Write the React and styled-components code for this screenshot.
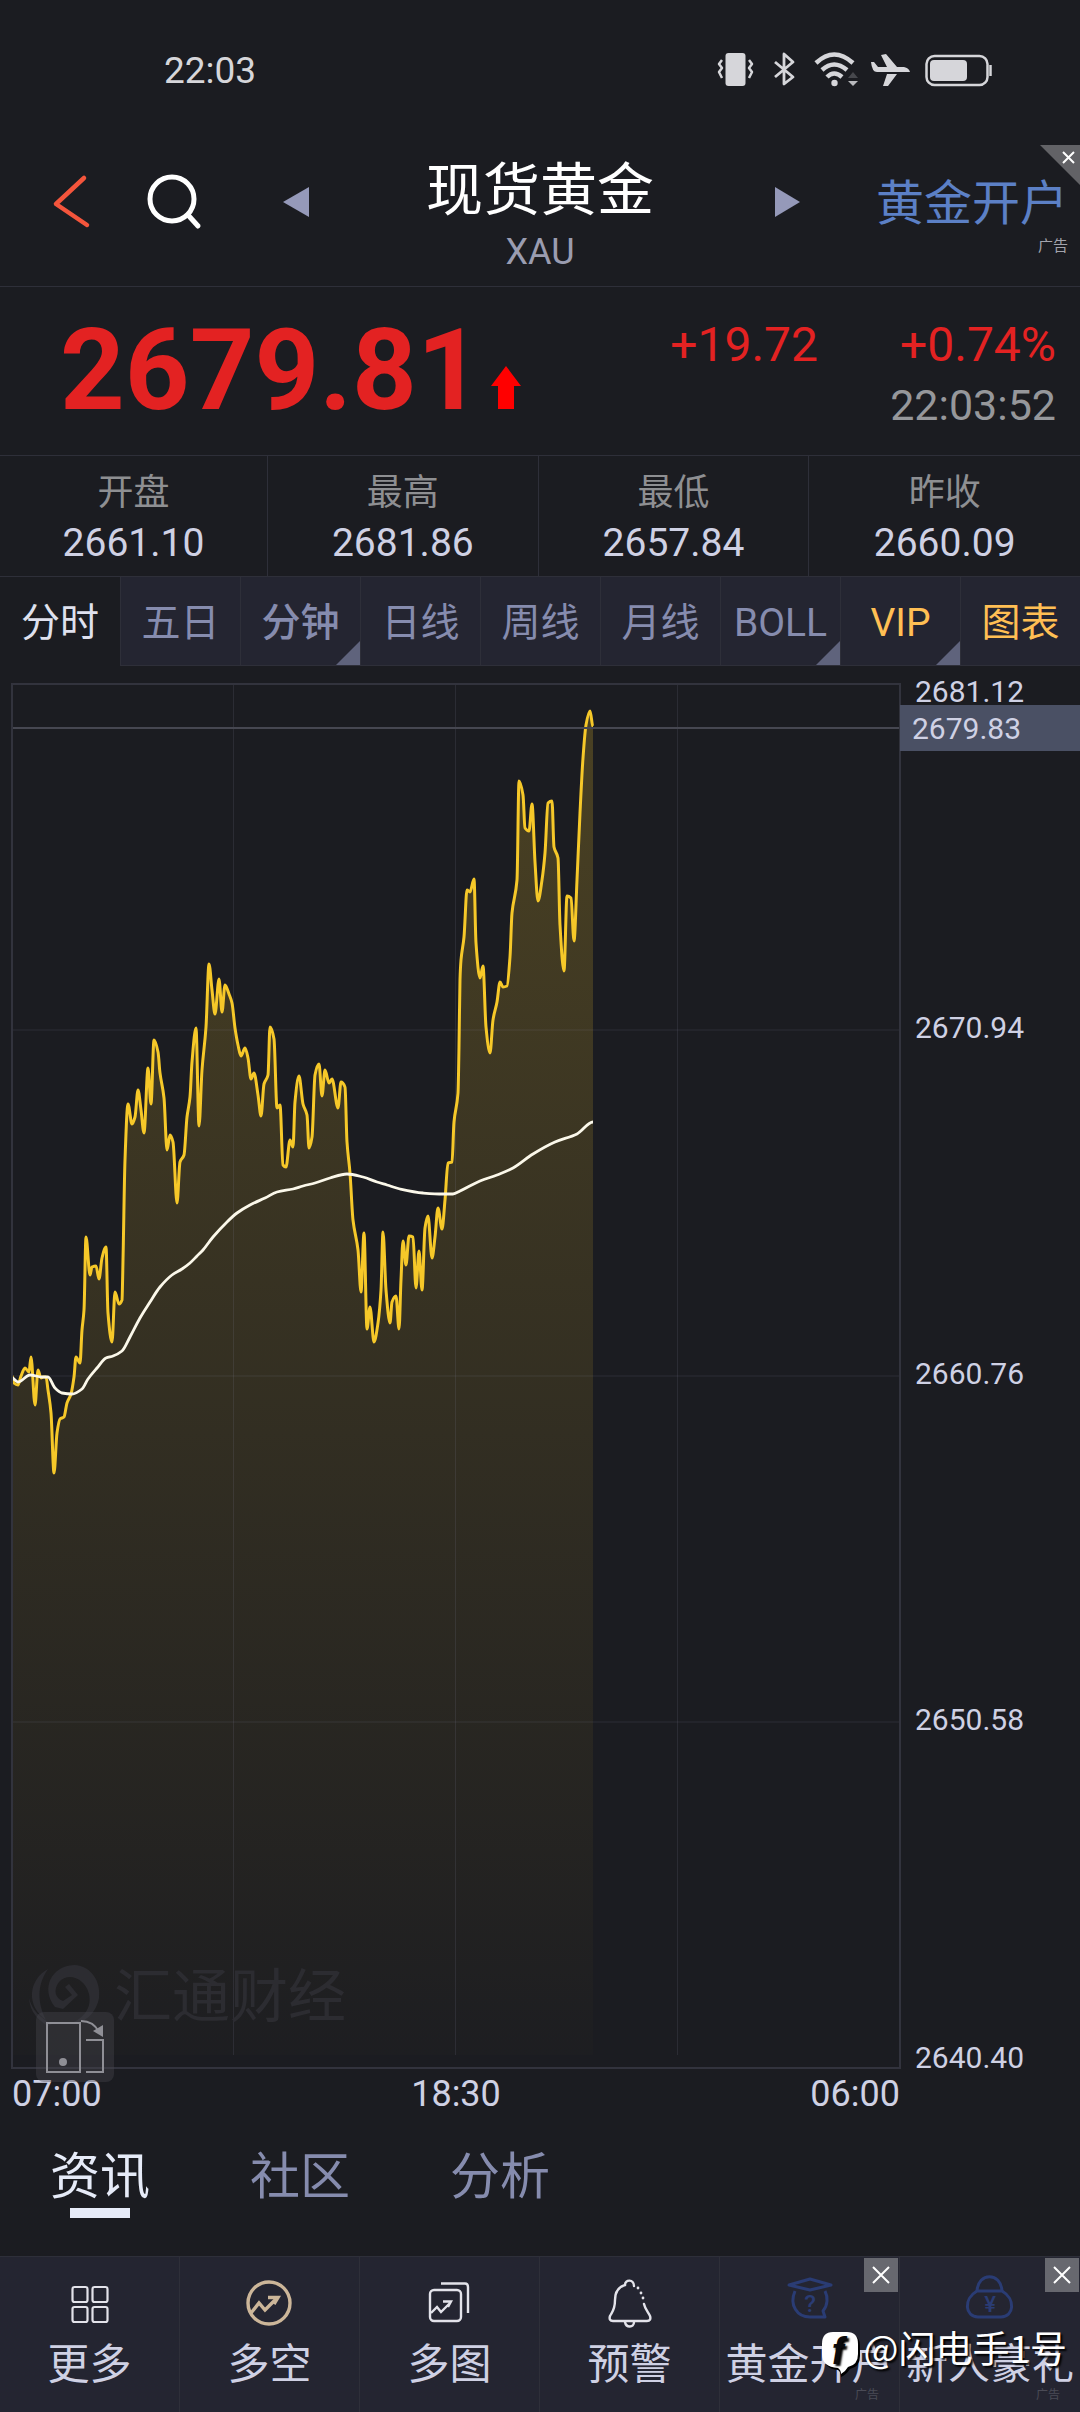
import React from "react";
import styled, { createGlobalStyle, css } from "styled-components";

const bg = "#1b1c21";
const panel = "#242531";
const line = "#2e2f39";
const red = "#e32222";
const muted = "#868cae";
const light = "#cfd1e4";
const gold = "#ffbf54";

/* price line and average line, in plot units (888 x 1384) */
const PLOT_W = 888;
const PLOT_H = 1384;
const AREA_BOTTOM = 1371;

const price = [
    [0,692],[2,699],[6,701],[9,692],[13,684],[17,688],[19,673],[23,721],[26,686],[29,694],[31,693],[34,693],
    [36,706],[39,729],[42,789],[45,749],[48,735],[52,733],[55,719],[59,710],[62,693],[64,673],[68,679],[70,646],
    [72,626],[74,553],[78,591],[80,583],[84,582],[87,595],[90,574],[94,563],[96,629],[100,658],[103,608],[107,620],
    [110,616],[111,576],[113,476],[116,420],[120,440],[123,433],[126,406],[129,426],[132,449],[136,384],[139,420],
    [142,356],[146,368],[148,389],[152,414],[155,466],[158,451],[161,458],[165,519],[168,478],[172,471],[175,433],
    [178,413],[180,378],[184,344],[187,442],[190,386],[194,343],[197,280],[200,306],[203,330],[207,295],[210,328],
    [213,301],[217,310],[220,319],[223,344],[226,361],[229,372],[233,364],[236,374],[239,395],[242,389],[246,411],
    [249,432],[252,400],[256,391],[258,343],[262,355],[265,424],[268,421],[271,481],[274,483],[278,456],[281,463],
    [283,418],[287,392],[291,420],[295,431],[297,464],[300,453],[303,391],[307,380],[310,412],[313,386],[317,399],
    [320,395],[326,424],[329,398],[333,403],[335,458],[338,489],[341,536],[346,566],[349,608],[352,549],[355,645],
    [358,623],[362,658],[366,639],[369,606],[371,548],[374,606],[378,639],[380,618],[384,612],[387,645],[389,596],
    [391,557],[394,581],[397,552],[401,553],[404,604],[407,567],[410,606],[413,544],[416,532],[420,574],[423,553],
    [426,524],[430,545],[433,516],[436,479],[440,478],[442,438],[446,409],[447,363],[448,296],[449,276],[452,253],
    [455,206],[458,208],[462,195],[464,259],[468,294],[471,282],[474,343],[478,369],[481,336],[485,318],[488,298],
    [491,303],[495,302],[498,273],[500,229],[505,196],[507,97],[511,111],[513,144],[517,147],[520,120],[523,178],
    [526,217],[530,196],[533,169],[536,119],[540,117],[542,163],[546,174],[548,241],[552,287],[555,212],[559,214],
    [562,257],[565,196],[568,129],[571,74],[574,41],[578,27],[581,43],
];

const average = [
    [0,694],[6,698],[18,691],[30,693],[36,693],[43,704],[50,709],[60,710],[70,705],[76,695],[85,684],[94,674],
    [101,672],[110,667],[118,653],[128,634],[138,618],[148,603],[160,591],[170,585],[178,579],[185,572],[191,566],
    [201,553],[215,538],[225,529],[238,521],[253,514],[265,508],[281,505],[291,502],[303,499],[318,494],[335,490],
    [351,493],[365,498],[375,501],[388,505],[411,509],[431,510],[441,510],[448,507],[468,497],[485,491],[501,484],
    [521,470],[543,458],[565,450],[581,438],
];

// monotone cubic, so the peaks stay where the data puts them
function smooth(points) {
    const slope = (a, b) => (b[1] - a[1]) / (b[0] - a[0]);
    const tangents = points.map((p, i) => {
        if (i === 0 || i === points.length - 1) return 0;
        const before = slope(points[i - 1], p);
        const after = slope(p, points[i + 1]);
        return before * after <= 0 ? 0 : (2 * before * after) / (before + after);
    });
    return points.reduce((d, p, i) => {
        if (i === 0) return `M${p[0]} ${p[1]}`;
        const q = points[i - 1];
        const h = (p[0] - q[0]) / 3;
        const c1 = (q[1] + tangents[i - 1] * h).toFixed(1);
        const c2 = (p[1] - tangents[i] * h).toFixed(1);
        return `${d}C${(q[0] + h).toFixed(1)} ${c1} ${(p[0] - h).toFixed(1)} ${c2} ${p[0]} ${p[1]}`;
    }, "");
}

const stats = [
    ["开盘", "2661.10"],
    ["最高", "2681.86"],
    ["最低", "2657.84"],
    ["昨收", "2660.09"],
];

const periods = [
    { name: "分时", active: true },
    { name: "五日" },
    { name: "分钟", more: true, strong: true },
    { name: "日线" },
    { name: "周线" },
    { name: "月线" },
    { name: "BOLL", more: true },
    { name: "VIP", more: true, gold: true },
    { name: "图表", gold: true },
];

const scale = ["2681.12", "2670.94", "2660.76", "2650.58", "2640.40"];

const tools = [
    { name: "更多", Icon: GridIcon },
    { name: "多空", Icon: TrendIcon },
    { name: "多图", Icon: ChartsIcon },
    { name: "预警", Icon: BellIcon },
    { name: "黄金开户", Icon: HatIcon, ad: true },
    { name: "新人豪礼", Icon: PurseIcon, ad: true },
];

export default function App() {
    return (
        <Screen>
            <GlobalStyle />
            <StatusBar>
                <span>22:03</span>
                <StatusIcons />
            </StatusBar>

            <Header>
                <HeaderSide>
                    <IconButton aria-label="返回">
                        <svg width="40" height="60" viewBox="0 0 40 60" fill="none" stroke="#f4553c" strokeWidth="4.500" strokeLinecap="round" strokeLinejoin="round">
                            <path d="M34 6 L6 32 L37 53" />
                        </svg>
                    </IconButton>
                    <IconButton aria-label="搜索">
                        <svg width="60" height="60" viewBox="0 0 60 60" fill="none" stroke="#fff" strokeWidth="5" strokeLinecap="round">
                            <circle cx="28" cy="27" r="22" />
                            <path d="M44 43 L54 54" />
                        </svg>
                    </IconButton>
                </HeaderSide>
                <HeaderMiddle>
                    <IconButton aria-label="上一个">
                        <svg width="32" height="32" viewBox="0 0 32 32" fill="#9599b9"><path d="M3 16 L29 1 V31 Z" /></svg>
                    </IconButton>
                    <Title>
                        <h1>现货黄金</h1>
                        <p>XAU</p>
                    </Title>
                    <IconButton aria-label="下一个">
                        <svg width="32" height="32" viewBox="0 0 32 32" fill="#9599b9"><path d="M32 16 L7 1 V31 Z" /></svg>
                    </IconButton>
                </HeaderMiddle>
                <HeaderAd>
                    <a href="#open">黄金开户</a>
                    <span>广告</span>
                </HeaderAd>
                <CornerClose aria-label="关闭广告">
                    <svg width="40" height="40" viewBox="0 0 40 40">
                        <path d="M0 0 H40 V40 Z" fill="#626266" />
                        <path d="M23 7 L34 18 M34 7 L23 18" stroke="#fff" strokeWidth="2" />
                    </svg>
                </CornerClose>
            </Header>

            <Quote>
                <Price>
                    2679.81
                    <svg width="30" height="44" viewBox="0 0 30 44" fill="#ff0000"><path d="M15 0 L30 20 H23 V43 H7 V20 H0 Z" /></svg>
                </Price>
                <Change>
                    <div><span>+19.72</span><span>+0.74%</span></div>
                    <time>22:03:52</time>
                </Change>
            </Quote>

            <Stats>
                {stats.map(([label, value]) => (
                    <Stat key={label}>
                        <dt>{label}</dt>
                        <dd>{value}</dd>
                    </Stat>
                ))}
            </Stats>

            <Periods>
                {periods.map(p => (
                    <Period key={p.name} $active={p.active} $gold={p.gold} $more={p.more} $strong={p.strong}>{p.name}</Period>
                ))}
            </Periods>

            <Chart />

            <Tabs>
                <Tab href="#news" $active>资讯</Tab>
                <Tab href="#community">社区</Tab>
                <Tab href="#analysis">分析</Tab>
            </Tabs>

            <Toolbar>
                {tools.map(({ name, Icon, ad }) => (
                    <Tool key={name}>
                        <ToolButton><Icon />{name}</ToolButton>
                        {ad && <AdTag>广告</AdTag>}
                        {ad && (
                            <ToolClose aria-label={`关闭${name}`}>
                                <svg width="34" height="34" viewBox="0 0 34 34" stroke="#fff" strokeWidth="2"><path d="M9 9 L25 25 M25 9 L9 25" /></svg>
                            </ToolClose>
                        )}
                    </Tool>
                ))}
                <Author>
                    <svg width="42" height="48" viewBox="0 0 42 48">
                        <path d="M13 4 H27 Q39 4 39 16 V26 Q39 37 29 39 Q25 45 20 47 Q20 42 17 40 Q3 39 3 26 V16 Q3 4 13 4 Z" fill="#000" />
                        <path d="M12 2 H26 Q37 2 37 14 V24 Q37 35 27 37 Q24 42 20 44 Q20 40 17 38 Q1 37 1 24 V14 Q1 2 12 2 Z" fill="#fff" />
                        <text x="11" y="34" fontFamily="Roboto, sans-serif" fontSize="36" fontWeight="700" fontStyle="italic" fill="#0b0b0d">f</text>
                    </svg>
                    @闪电手1号
                </Author>
            </Toolbar>
        </Screen>
    );
}

function Chart() {
    const path = smooth(price);
    return (
        <ChartSection>
            <Plot>
                <svg viewBox={`0 0 ${PLOT_W} ${PLOT_H}`} fill="none">
                    <defs>
                        <linearGradient id="area" gradientUnits="userSpaceOnUse" x1="0" y1="0" x2="0" y2={AREA_BOTTOM}>
                            <stop offset="0" stopColor="#f5c72a" stopOpacity="0.22" />
                            <stop offset="1" stopColor="#f5c72a" stopOpacity="0.01" />
                        </linearGradient>
                    </defs>
                    <path d={`${path}V${AREA_BOTTOM}H0Z`} fill="url(#area)" />
                    <g stroke="#8c8caa">
                        {[1, 2, 3].map(n => (
                            <React.Fragment key={n}>
                                <path d={`M0 ${346 * n}H888`} strokeWidth="2" strokeOpacity="0.08" />
                                <path d={`M${222 * n - 0.5} 0V${AREA_BOTTOM}`} strokeWidth="1" strokeOpacity="0.14" />
                            </React.Fragment>
                        ))}
                    </g>
                    <path d={path} stroke="#f6c829" strokeWidth="3" strokeLinejoin="round" />
                    <path d={smooth(average)} stroke="#fbf8ea" strokeWidth="2.800" strokeLinejoin="round" />
                    <path d="M0 44H888" stroke="#464751" strokeWidth="2" />
                    <rect x="0" y="0" width="888" height="1384" stroke="#32333d" strokeWidth="2" />
                </svg>
                <Brand>
                    <svg width="76" height="66" viewBox="0 0 76 66" fill="currentColor">
                        <path d="M27 43 C12 24 24 2 46 1 C64 2 73 18 71 34 C68 50 56 60 42 60 C56 54 64 44 61 30 C57 14 40 8 31 18 C25 26 27 34 35 37 L44 31 L37 23 L41 20 L50 31 L35 45 Z" />
                        <path d="M20 5 C0 16 -2 42 18 56 C10 40 8 22 20 5 Z" />
                        <path d="M1 34 C2 48 10 56 20 62 L24 60 C12 54 4 46 1 34 Z" />
                    </svg>
                    汇通财经
                </Brand>
                <RotateButton aria-label="横屏">
                    <svg width="78" height="70" viewBox="0 0 78 70" fill="none" stroke="#8f8f96" strokeWidth="2">
                        <rect x="11" y="11" width="33" height="49" />
                        <circle cx="27" cy="50" r="4" fill="#8f8f96" stroke="none" />
                        <path d="M50 28 H67 V60 H50" />
                        <path d="M45 9 C54 9 60 14 63 20" />
                        <path d="M67 13 V25 L57 19 Z" fill="#8f8f96" stroke="none" />
                    </svg>
                </RotateButton>
            </Plot>
            <Scale>
                {scale.map(v => <span key={v}>{v}</span>)}
                <PriceTag>2679.83</PriceTag>
            </Scale>
            <Times>
                <span>07:00</span>
                <span>18:30</span>
                <span>06:00</span>
            </Times>
        </ChartSection>
    );
}

function StatusIcons() {
    const c = "#d6d6da";
    return (
        <StatusGroup>
            <svg width="44" height="36" viewBox="0 0 44 36" fill="none" stroke={c} strokeWidth="3" strokeLinejoin="round">
                <rect x="7.500" y="0" width="20" height="33" rx="3" fill={c} stroke="none" />
                <path d="M4 7 L1 11 L4 15 L1 19 L4 25 M31 7 L34 11 L31 15 L34 19 L31 25" strokeWidth="2.500" />
            </svg>
            <svg width="28" height="36" viewBox="0 0 28 36" fill="none" stroke={c} strokeWidth="2.800" strokeLinejoin="round">
                <path d="M1 9 L19 24 L10 31 V1 L19 9 L1 24" />
            </svg>
            <svg width="44" height="36" viewBox="0 0 44 36" fill="none" stroke={c} strokeWidth="4.500">
                <path d="M2 10 Q20 -7 39 10" />
                <path d="M8 17 Q20 6 33 17" />
                <path d="M13 24 Q20 17 28 24" />
                <circle cx="20.500" cy="30" r="3.200" fill={c} stroke="none" />
                <path d="M34 25 L39 19 L44 25 Z" fill="#47484d" stroke="none" />
                <path d="M34 28 L39 33 L44 28 Z" fill="#b9b9bd" stroke="none" />
            </svg>
            <svg width="43" height="36" viewBox="0 0 43 36" fill={c}>
                <path d="M1 9 L4 9 L8 14 H17 L11 2 L16 1 L27 14 H34 Q39 15 40 19 H7 Q2 19 1 9 Z M17 21 H27 L18 33 H13 Z" />
            </svg>
            <svg width="68" height="36" viewBox="0 0 68 36" fill="none" stroke={c} strokeWidth="2.500">
                <rect x="1.500" y="3" width="61" height="29" rx="8" />
                <rect x="5" y="7" width="37" height="21" rx="4" fill={c} stroke="none" />
                <path d="M65.500 12 V23" />
            </svg>
        </StatusGroup>
    );
}

function GridIcon() {
    return (
        <svg width="50" height="50" viewBox="0 0 50 50" fill="none" stroke="#e3e3ea" strokeWidth="2.200">
            <rect x="7.500" y="8" width="15" height="15" rx="2" />
            <rect x="27.500" y="8" width="15" height="15" rx="2" />
            <rect x="7.500" y="28" width="15" height="15" rx="2" />
            <rect x="27.500" y="28" width="15" height="15" rx="2" />
        </svg>
    );
}

function TrendIcon() {
    return (
        <svg width="50" height="50" viewBox="0 0 50 50" fill="none" stroke="#ccb699" strokeWidth="3.400">
            <circle cx="24" cy="24" r="21" />
            <path d="M6 34 L14 24 L20 31 L31 20" />
            <path d="M23 18.500 H33 L29 25" />
        </svg>
    );
}

function ChartsIcon() {
    return (
        <svg width="50" height="50" viewBox="0 0 50 50" fill="none" stroke="#e3e3ea" strokeWidth="2.400">
            <rect x="5" y="11" width="31" height="31" rx="4" />
            <path d="M16 4.500 H40 Q43 4.500 43 8 V34" />
            <path d="M6 34 L12 28 L16 33 L25 24 M18 22.500 H26 L23 28" />
        </svg>
    );
}

function BellIcon() {
    return (
        <svg width="50" height="50" viewBox="0 0 50 50" fill="none" stroke="#e3e3ea" strokeWidth="2.400" strokeLinecap="round">
            <path d="M29 7 C29 0 20 0 20 6 C13 8 10 14 10 21 C10 31 7 33 5 37 C4 40 5 42 8 42 H42 C45 42 46 40 45 37 C43 33 40 30 39 25" />
            <path d="M20 43 C21 49 29 49 29 43" />
            <path d="M33 9 L33 9 M36 14 L36 14 M38 19 L38 19" strokeWidth="2.800" />
        </svg>
    );
}

function HatIcon() {
    return (
        <svg width="50" height="50" viewBox="0 0 50 50" fill="none" stroke="#2a3c74" strokeWidth="3" strokeLinejoin="round">
            <path d="M4 6 L25 0 L46 6 L25 11 Z" />
            <path d="M10 12 C4 26 12 38 25 38 H40 L38 32 C43 26 43 18 40 12" />
            <text x="25" y="33" textAnchor="middle" fontFamily="Roboto, sans-serif" fontSize="24" fontWeight="500" fill="#2a3c74" stroke="none">?</text>
        </svg>
    );
}

function PurseIcon() {
    return (
        <svg width="50" height="50" viewBox="0 0 50 50" fill="none" stroke="#2a3c74" strokeWidth="3" strokeLinejoin="round">
            <path d="M12 12 C13 -7 36 -7 37 12" />
            <path d="M12 12 H37 C51 20 49 38 36 38 H13 C0 38 -2 20 12 12 Z" />
            <text x="25" y="33" textAnchor="middle" fontFamily="Roboto, sans-serif" fontSize="22" fontWeight="500" fill="#2a3c74" stroke="none">¥</text>
        </svg>
    );
}

const GlobalStyle = createGlobalStyle`
    *{
        box-sizing: border-box;
    }

    body{
        margin: 0;
        background: ${bg};
        font-family: Roboto, "Noto Sans CJK SC", sans-serif;
    }

    h1, p, dl, dd, ul{
        margin: 0;
        padding: 0;
        font-weight: 400;
    }

    button{
        border: none;
        padding: 0;
        background: none;
        color: inherit;
        font: inherit;
        cursor: pointer;
    }

    a{
        text-decoration: none;
    }

    svg{
        display: block;
        flex: none;
        overflow: visible;
    }
`

const Screen = styled.main`
    background: ${bg};
`

const StatusBar = styled.div`
    display: flex;
    justify-content: space-between;
    align-items: center;
    padding: 46px 87px 49px 164px;
    color: #d6d6da;
    font-size: 37px;
    line-height: 50px;
`

const StatusGroup = styled.div`
    display: flex;
    gap: 12px;
`

const Header = styled.header`
    position: relative;
    display: grid;
    grid-template-columns: 1fr 520px 1fr;
    padding: 12px 0;
    border-bottom: 1px solid ${line};
`

const HeaderSide = styled.div`
    display: flex;
    align-items: center;
    gap: 54px;
    height: 90px;
    padding-left: 50px;
`

const IconButton = styled.button`
    display: flex;
    align-items: center;
    height: 90px;
`

const HeaderMiddle = styled.div`
    display: flex;
    justify-content: space-between;
`

const Title = styled.div`
    text-align: center;

    h1{
        margin-bottom: 5px;
        color: #fff;
        font-size: 57px;
        line-height: 68px;
    }

    p{
        color: #9a9cb0;
        font-size: 36px;
        line-height: 44px;
    }
`

const HeaderAd = styled.div`
    display: flex;
    flex-direction: column;
    align-items: flex-end;
    padding: 15px 12px 0 0;

    a{
        color: #5c80c6;
        font-size: 48px;
        line-height: 64px;
        white-space: nowrap;
    }

    span{
        color: #a3a4ac;
        font-size: 15px;
        line-height: 20px;
    }
`

const CornerClose = styled.button`
    position: absolute;
    top: 0;
    right: 0;
`

const Quote = styled.section`
    display: flex;
    justify-content: space-between;
    align-items: flex-start;
    padding: 28px 24px 20px 60px;
    border-bottom: 1px solid ${line};
`

const Price = styled.div`
    display: flex;
    align-items: flex-end;
    gap: 9px;
    color: ${red};
    font-size: 113px;
    font-weight: 700;
    line-height: 112px;

    svg{
        margin-bottom: 17px;
    }
`

const Change = styled.div`
    display: flex;
    flex-direction: column;
    align-items: flex-end;
    line-height: 60px;

    div{
        display: flex;
        gap: 82px;
        color: ${red};
        font-size: 48px;
    }

    time{
        color: #96979b;
        font-size: 43px;
    }
`

const Stats = styled.dl`
    display: grid;
    grid-template-columns: 268px repeat(3, 1fr);
    border-bottom: 1px solid ${line};
`

const Stat = styled.div`
    padding: 12px 0 8px;
    text-align: center;
    line-height: 50px;
    border-right: 1px solid ${line};

    &:last-child{
        border-right: none;
    }

    dt{
        color: #8e8f92;
        font-size: 36px;
    }

    dd{
        color: ${light};
        font-size: 39px;
    }
`

const Periods = styled.nav`
    display: grid;
    grid-template-columns: repeat(9, 1fr);
`

const Period = styled.button`
    position: relative;
    height: 89px;
    padding-top: 3px;
    border-bottom: 1px solid ${line};
    background: ${panel};
    color: ${muted};
    font-size: 39px;
    line-height: 80px;

    & + &{
        border-left: 1px solid ${line};
    }

    ${props => props.$strong && css`
        font-weight: 500;
    `}

    ${props => props.$gold && css`
        color: ${gold};
    `}

    ${props => props.$active && css`
        background: ${bg};
        border-bottom-color: ${bg};
        color: #dfe1ee;
    `}

    ${props => props.$more && css`
        &::after{
            content: "";
            position: absolute;
            right: 0;
            bottom: 0;
            border-left: 24px solid transparent;
            border-bottom: 24px solid #5f637c;
        }
    `}
`

const ChartSection = styled.section`
    display: grid;
    grid-template-columns: 1fr 180px;
    padding: 18px 0 0 12px;
    color: ${light};
`

const Plot = styled.div`
    position: relative;

    > svg{
        width: 100%;
        height: auto;
    }
`

const Brand = styled.div`
    position: absolute;
    left: 16px;
    bottom: 38px;
    display: flex;
    align-items: center;
    gap: 10px;
    color: #2c2c31;
    font-size: 58px;
    line-height: 66px;
`

const RotateButton = styled.button`
    position: absolute;
    left: 24px;
    bottom: -14px;
    border-radius: 8px;
    background: rgba(70, 70, 78, 0.4);
`

const Scale = styled.div`
    position: relative;
    display: flex;
    flex-direction: column;
    justify-content: space-between;
    padding-left: 15px;
    font-size: 30px;
    line-height: 36px;

    span:first-child{
        line-height: 16px;
    }

    span:nth-child(5){
        line-height: 20px;
    }
`

const PriceTag = styled.div`
    position: absolute;
    top: 21px;
    left: 0;
    right: 0;
    padding: 2px 0 0 12px;
    background: #4a5064;
    line-height: 44px;
`

const Times = styled.div`
    display: flex;
    justify-content: space-between;
    font-size: 36px;
    line-height: 52px;
`

const Tabs = styled.nav`
    display: flex;
    padding: 26px 0 38px;
`

const Tab = styled.a`
    width: 200px;
    color: ${muted};
    font-size: 50px;
    line-height: 62px;
    text-align: center;

    &::after{
        content: "";
        display: block;
        width: 60px;
        height: 10px;
        margin: 0 auto;
    }

    ${props => props.$active && css`
        color: #e6ebf8;

        &::after{
            background: #e6ebf8;
        }
    `}
`

const Toolbar = styled.ul`
    position: relative;
    display: grid;
    grid-template-columns: repeat(6, 1fr);
    border-top: 1px solid ${line};
    background: ${panel};
    list-style: none;
`

const Tool = styled.li`
    position: relative;
    border-right: 1px solid ${line};

    &:nth-child(6){
        border-right: none;
    }
`

const ToolButton = styled.button`
    display: flex;
    flex-direction: column;
    align-items: center;
    gap: 8px;
    width: 100%;
    padding: 22px 0 19px;
    color: ${light};
    font-size: 42px;
    line-height: 56px;
    white-space: nowrap;
`

const AdTag = styled.span`
    position: absolute;
    right: 20px;
    bottom: 8px;
    color: #4a4b56;
    font-size: 12px;
    line-height: 18px;
`

const ToolClose = styled.button`
    position: absolute;
    top: 1px;
    right: 1px;
    background: #67686f;
`

const Author = styled.li`
    position: absolute;
    right: 13px;
    bottom: 34px;
    display: flex;
    align-items: flex-start;
    color: #fff;
    font-family: "Noto Sans CJK SC", sans-serif;
    font-size: 37px;
    line-height: 34px;
    text-shadow: 2px 2px 2px #000;
`
